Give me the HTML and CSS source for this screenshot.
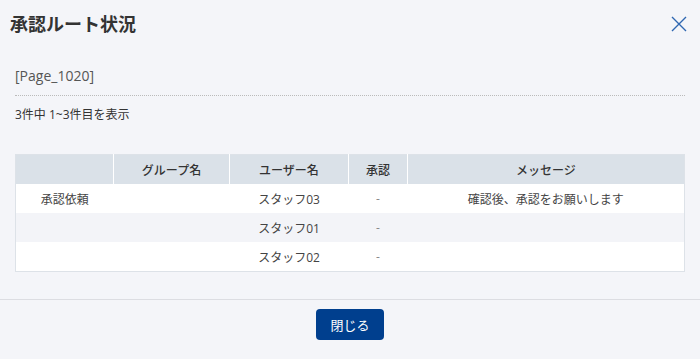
FILE: index.html
```html
<!DOCTYPE html>
<html lang="ja">
<head>
    <meta charset="UTF-8">
    <meta name="viewport" content="width=device-width, initial-scale=1.0">
    <title>承認ルート状況</title>
    <link rel="stylesheet" href="styles.css">
</head>
<body>

    <div class="dialog">
        <!-- Header -->
        <header class="dialog-header">
            <h1>承認ルート状況</h1>
            <button class="close-btn" aria-label="閉じる">
                <svg width="16" height="16" viewBox="0 0 16 16">
                    <path d="M1 1 L15 15 M15 1 L1 15" stroke="#2f67b1" stroke-width="1.4" fill="none"/>
                </svg>
            </button>
        </header>

        <!-- Body -->
        <section class="dialog-body">
            <p class="page-id">[Page_1020]</p>
            <p class="count">3件中 1~3件目を表示</p>

            <table class="route-table">
                <tr>
                    <th class="col-step"></th>
                    <th class="col-group">グループ名</th>
                    <th class="col-user">ユーザー名</th>
                    <th class="col-approve">承認</th>
                    <th>メッセージ</th>
                </tr>
                <tr>
                    <td>承認依頼</td>
                    <td></td>
                    <td>スタッフ03</td>
                    <td class="dash">-</td>
                    <td>確認後、承認をお願いします</td>
                </tr>
                <tr>
                    <td></td>
                    <td></td>
                    <td>スタッフ01</td>
                    <td class="dash">-</td>
                    <td></td>
                </tr>
                <tr>
                    <td></td>
                    <td></td>
                    <td>スタッフ02</td>
                    <td class="dash">-</td>
                    <td></td>
                </tr>
            </table>
        </section>

        <!-- Footer -->
        <footer class="dialog-footer">
            <button class="primary-btn">閉じる</button>
        </footer>
    </div>

</body>
</html>
```

FILE: styles.css
```css
body {
    margin: 0;
    padding: 0;
    background-color: #f4f5f9;
    font-family: "Open Sans", "Noto Sans CJK JP", sans-serif;
    color: #333;
}
.dialog {
    width: 700px;
    height: 359px;
}
.dialog-header {
    display: flex;
    justify-content: space-between;
    align-items: center;
    height: 46px;
    padding: 0 13px 0 10px;
}
.dialog-header h1 {
    margin: 0;
    font-size: 18px;
    font-weight: bold;
    color: #333;
}
.close-btn {
    background: none;
    border: none;
    padding: 0;
    margin-top: 2px;
    display: flex;
}
.dialog-body {
    padding: 0 15px;
}
.page-id {
    margin: 20px 0 0;
    font-size: 14px;
    line-height: 20px;
    color: #555;
    padding-bottom: 9px;
    border-bottom: 1px dotted #bbb;
}
.count {
    margin: 10px 0 0;
    font-size: 12px;
    line-height: 18px;
    color: #333;
}
.route-table {
    width: 100%;
    margin-top: 30px;
    border-collapse: collapse;
    border: 1px solid #dde2e8;
    font-size: 12px;
    color: #444;
}
.route-table th {
    background-color: #dae1e8;
    height: 29px;
    padding: 0;
    font-weight: 500;
    color: #333;
    border-left: 1px solid #fff;
}
.route-table th:first-child {
    border-left: none;
}
.route-table td {
    height: 29px;
    padding: 0;
    text-align: center;
    background-color: #fff;
}
.route-table tr:nth-child(3) td {
    background-color: #f3f4f8;
}
.route-table td.dash {
    color: #888;
}
.col-step { width: 97px; }
.col-group { width: 115px; }
.col-user { width: 118px; }
.col-approve { width: 58px; }
.dialog-footer {
    margin-top: 27px;
    border-top: 1px solid #dcdde2;
    display: flex;
    justify-content: center;
    padding-top: 9px;
}
.primary-btn {
    width: 68px;
    height: 31px;
    background-color: #003f8e;
    color: #fff;
    border: none;
    border-radius: 4px;
    font-family: inherit;
    font-size: 13px;
}
```
